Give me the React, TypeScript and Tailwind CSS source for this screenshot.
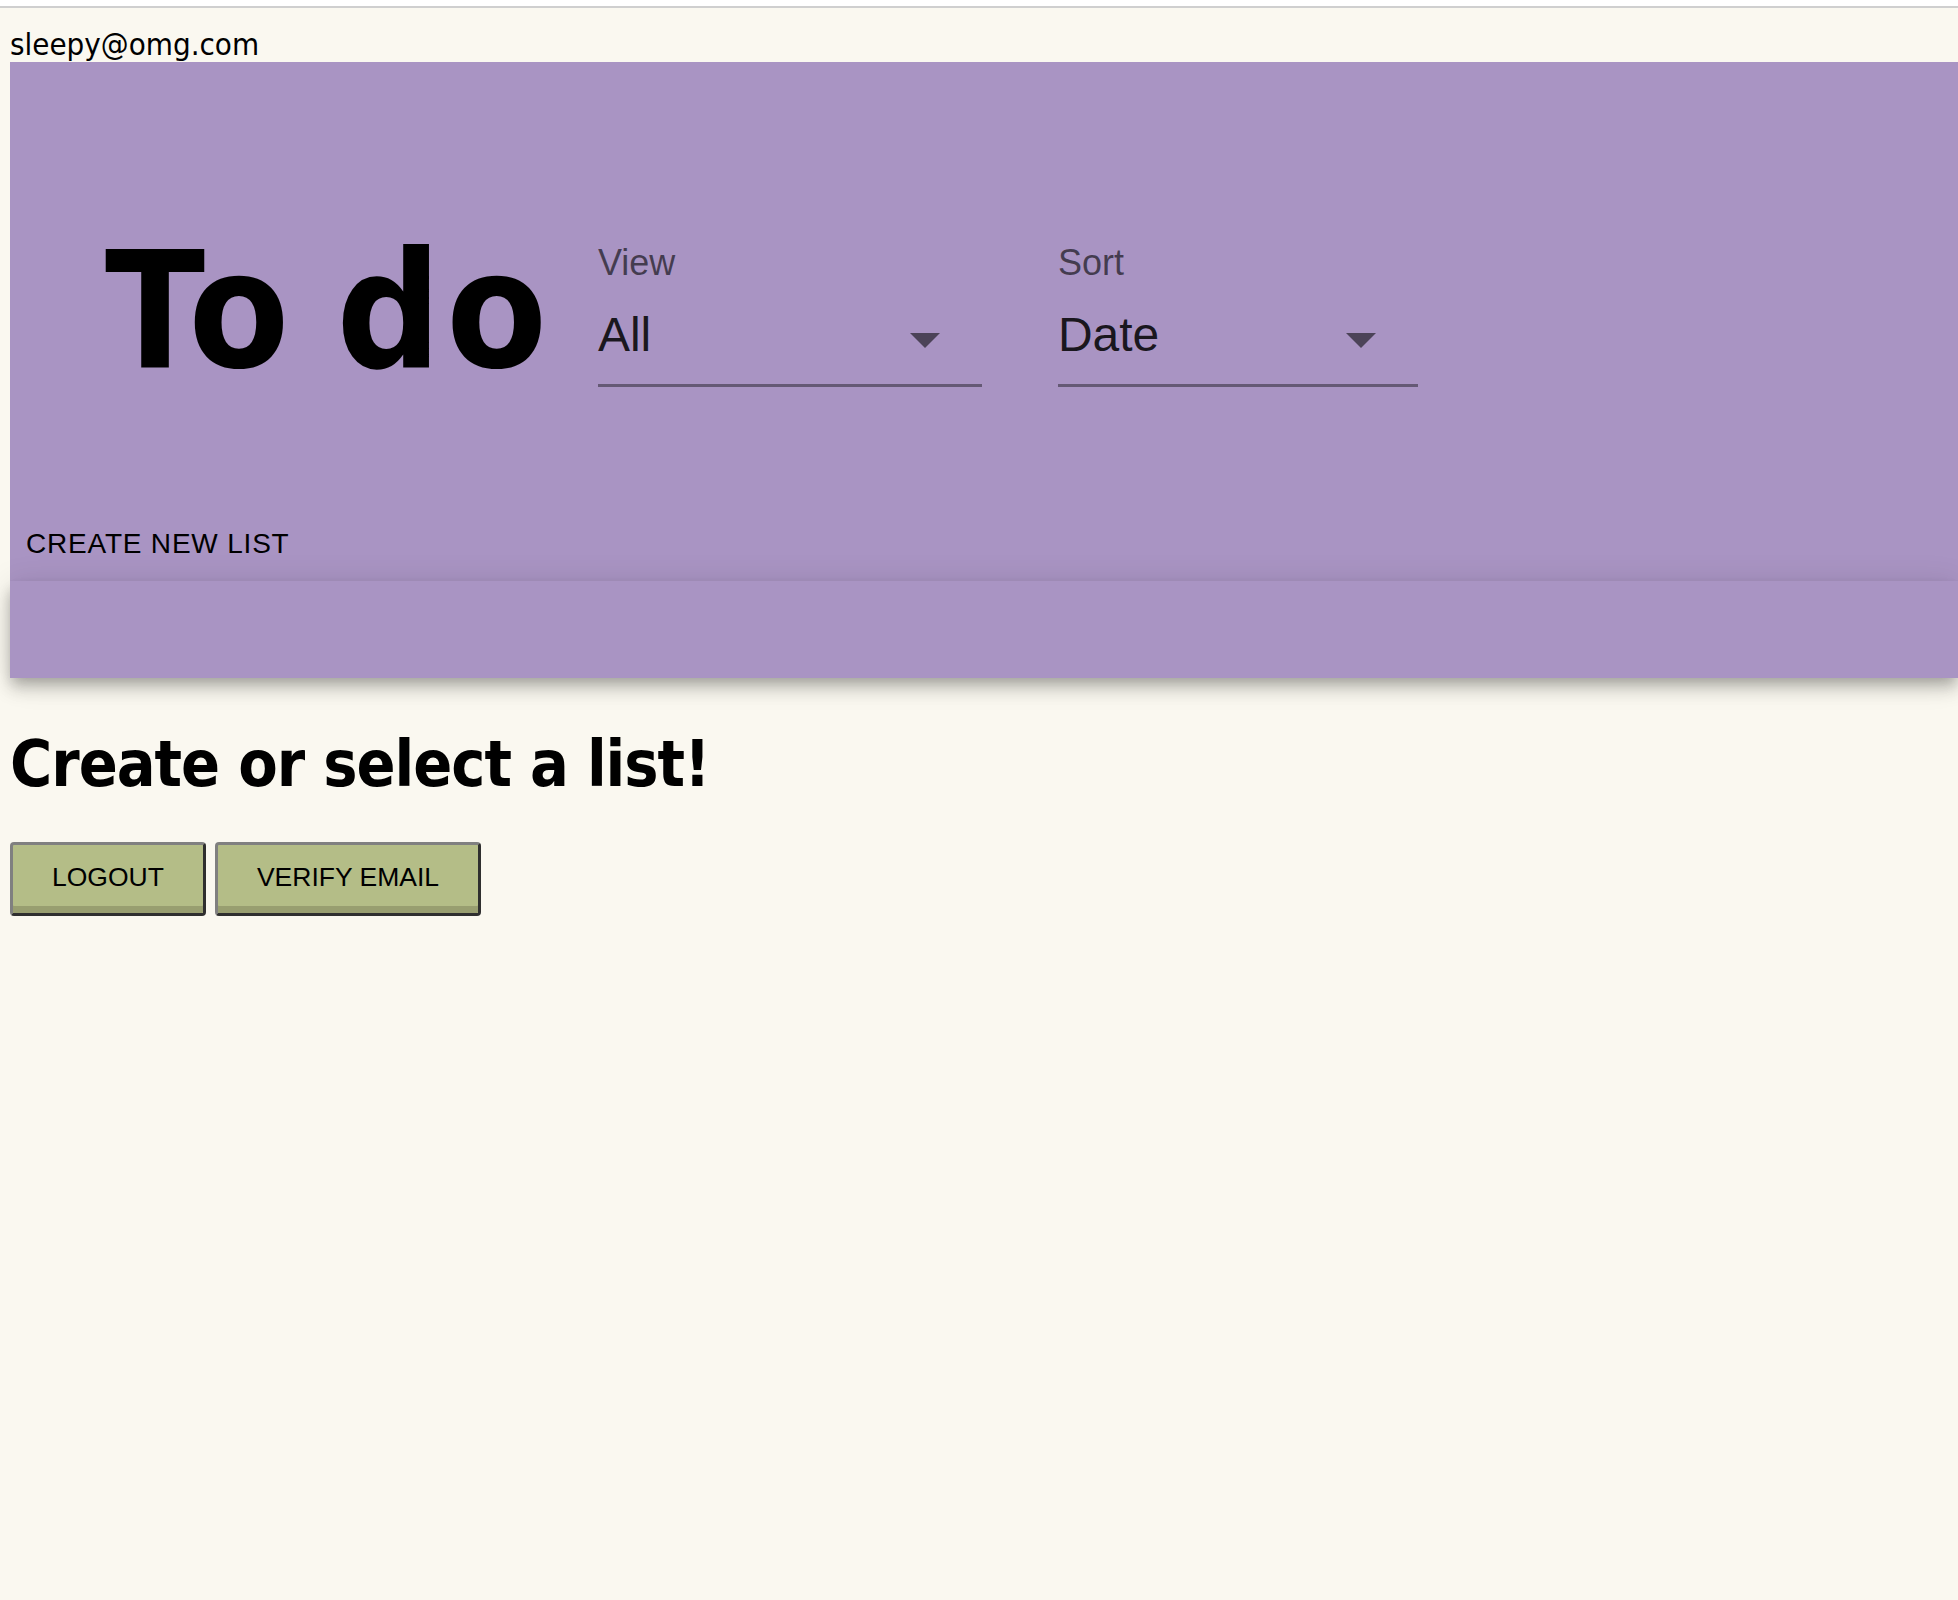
import React from 'react'

const TAHOMA = "font-['DejaVu_Sans_Condensed','DejaVu_Sans',sans-serif]"

function Select({ label, value, width }: { label: string; value: string; width: string }) {
  return (
    <div className={`mt-[16px] flex flex-col ${width}`}>
      <span className="text-[36px] leading-none text-black/60">{label}</span>
      <div className="mt-[30px] flex items-center justify-between border-b-[3px] border-black/40 pb-[25px] pr-[42px]">
        <span className="text-[48px] leading-none text-black/85">{value}</span>
        <svg width="30" height="15" viewBox="0 0 10 5" className="mt-[10px] fill-black/55">
          <path d="M0 0l5 5 5-5z" />
        </svg>
      </div>
    </div>
  )
}

function OldButton({ children }: { children: React.ReactNode }) {
  return (
    <button className="flex h-[74px] items-center rounded-[4px] border-[3px] border-t-[#808080] border-l-[#808080] border-r-[#2f2f2f] border-b-[#2f2f2f] bg-[#b4bd87] px-[39px] pb-[3px] text-[26.5px] leading-none text-black shadow-[inset_0_-7px_0_#989e70]">
      {children}
    </button>
  )
}

export default function App() {
  return (
    <div className="min-h-[1600px] overflow-hidden bg-[#faf8f0] font-['Liberation_Sans',Arial,sans-serif]">
      <div className="h-[6px] bg-white" />
      <div className="h-[2px] bg-[#cfcfcf]" />

      <div className="pl-[10px]">
        <p className={`pt-[21px] text-[31px] leading-none text-black ${TAHOMA}`}>sleepy@omg.com</p>

        <header className="mt-[2px] bg-[#a994c3]">
          <div className="flex items-start pl-[95px] pt-[167px]">
            <h1 className={`text-[163px] font-bold leading-none tracking-[5px] text-black [word-spacing:-14px] ${TAHOMA}`}>
              To do
            </h1>
            <div className="ml-[46px] flex gap-[76px]">
              <Select label="View" value="All" width="w-[384px]" />
              <Select label="Sort" value="Date" width="w-[360px]" />
            </div>
          </div>
          <div className="mt-[138px] pb-[21px] pl-[16px]">
            <button className="text-[28px] leading-none tracking-[0.8px] text-black">CREATE NEW LIST</button>
          </div>
        </header>

        <div className="h-[97px] bg-[#a994c3] shadow-[0_6px_12px_-3px_rgba(0,0,0,0.2),0_12px_15px_0_rgba(0,0,0,0.14),0_3px_30px_0_rgba(0,0,0,0.12)]" />

        <h2 className={`mt-[54px] text-[64px] font-bold leading-none tracking-[-1px] text-black ${TAHOMA}`}>
          Create or select a list!
        </h2>

        <div className="mt-[46px] flex gap-[9px]">
          <OldButton>LOGOUT</OldButton>
          <OldButton>VERIFY EMAIL</OldButton>
        </div>
      </div>
    </div>
  )
}
